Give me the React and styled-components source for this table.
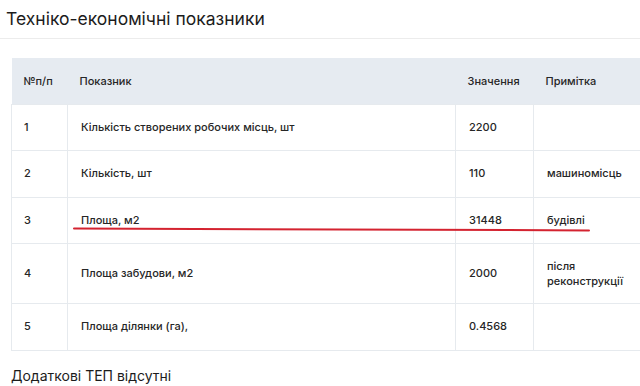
import styled, { createGlobalStyle } from "styled-components";

const GlobalStyle = createGlobalStyle`
    html, body {
        margin: 0;
        padding: 0;
        background: #fff;
        overflow: hidden;
    }
    body {
        font-family: Inter, "Noto Sans", sans-serif;
        color: #1f1f1f;
    }
`;

const rows = [
    { num: 1, name: "Кількість створених робочих місць, шт", value: "2200", note: "" },
    { num: 2, name: "Кількість, шт", value: "110", note: "машиномісць" },
    { num: 3, name: "Площа, м2", value: "31448", note: "будівлі" },
    { num: 4, name: "Площа забудови, м2", value: "2000", note: "після реконструкції" },
    { num: 5, name: "Площа ділянки (га),", value: "0.4568", note: "" },
];

const Page = styled.div`
    position: relative;
    width: 640px;
    height: 386px;
    overflow: hidden;
`;

const Title = styled.h2`
    margin: 0;
    padding: 8px 0 0 6px;
    height: 39px;
    box-sizing: border-box;
    font-size: 17.5px;
    font-weight: 400;
    color: #1c1c1c;
    border-bottom: 1px solid #ececec;
`;

const Section = styled.div`
    padding: 19px 0 0 11px;
`;

const Table = styled.table`
    width: 644px;
    border-collapse: collapse;
    table-layout: fixed;
    font-size: 11px;
    font-weight: 500;
    color: #262626;
`;

const HeadCell = styled.th`
    height: 46px;
    padding: 0 12px;
    text-align: left;
    font-weight: 500;
    background: #e6ebf1;
    width: ${p => p.w}px;
    box-sizing: border-box;
`;

const Cell = styled.td`
    height: ${p => (p.tall ? 60 : 46.5)}px;
    padding: 0 12px 0 13px;
    border: 1px solid #e6eaee;
    line-height: 15px;
    vertical-align: middle;
    box-sizing: border-box;
    &:first-child {
        padding-left: 12px;
    }
`;

const Footer = styled.h3`
    margin: 0;
    padding: 16px 0 0 11px;
    font-size: 14px;
    font-weight: 400;
    color: #1c1c1c;
`;

const Mark = styled.svg`
    position: absolute;
    left: 0;
    top: 0;
    pointer-events: none;
`;

export default function App() {
    return <Page>
        <GlobalStyle />
        <Title>Техніко-економічні показники</Title>
        <Section>
            <Table>
                <thead>
                    <tr>
                        <HeadCell w={56}>№п/п</HeadCell>
                        <HeadCell w={388}>Показник</HeadCell>
                        <HeadCell w={78}>Значення</HeadCell>
                        <HeadCell w={122}>Примітка</HeadCell>
                    </tr>
                </thead>
                <tbody>
                    {rows.map(r => {
                        const tall = r.note.length > 12;
                        return <tr key={r.num}>
                            <Cell tall={tall}>{r.num}</Cell>
                            <Cell tall={tall}>{r.name}</Cell>
                            <Cell tall={tall}>{r.value}</Cell>
                            <Cell tall={tall}>{r.note}</Cell>
                        </tr>
                    })}
                </tbody>
            </Table>
        </Section>
        <Footer>Додаткові ТЕП відсутні</Footer>
        <Mark width="640" height="386">
            <path d="M74 228.6 L589 230.4" stroke="#d42330" strokeWidth="2" fill="none" strokeLinecap="round" />
        </Mark>
    </Page>
}
